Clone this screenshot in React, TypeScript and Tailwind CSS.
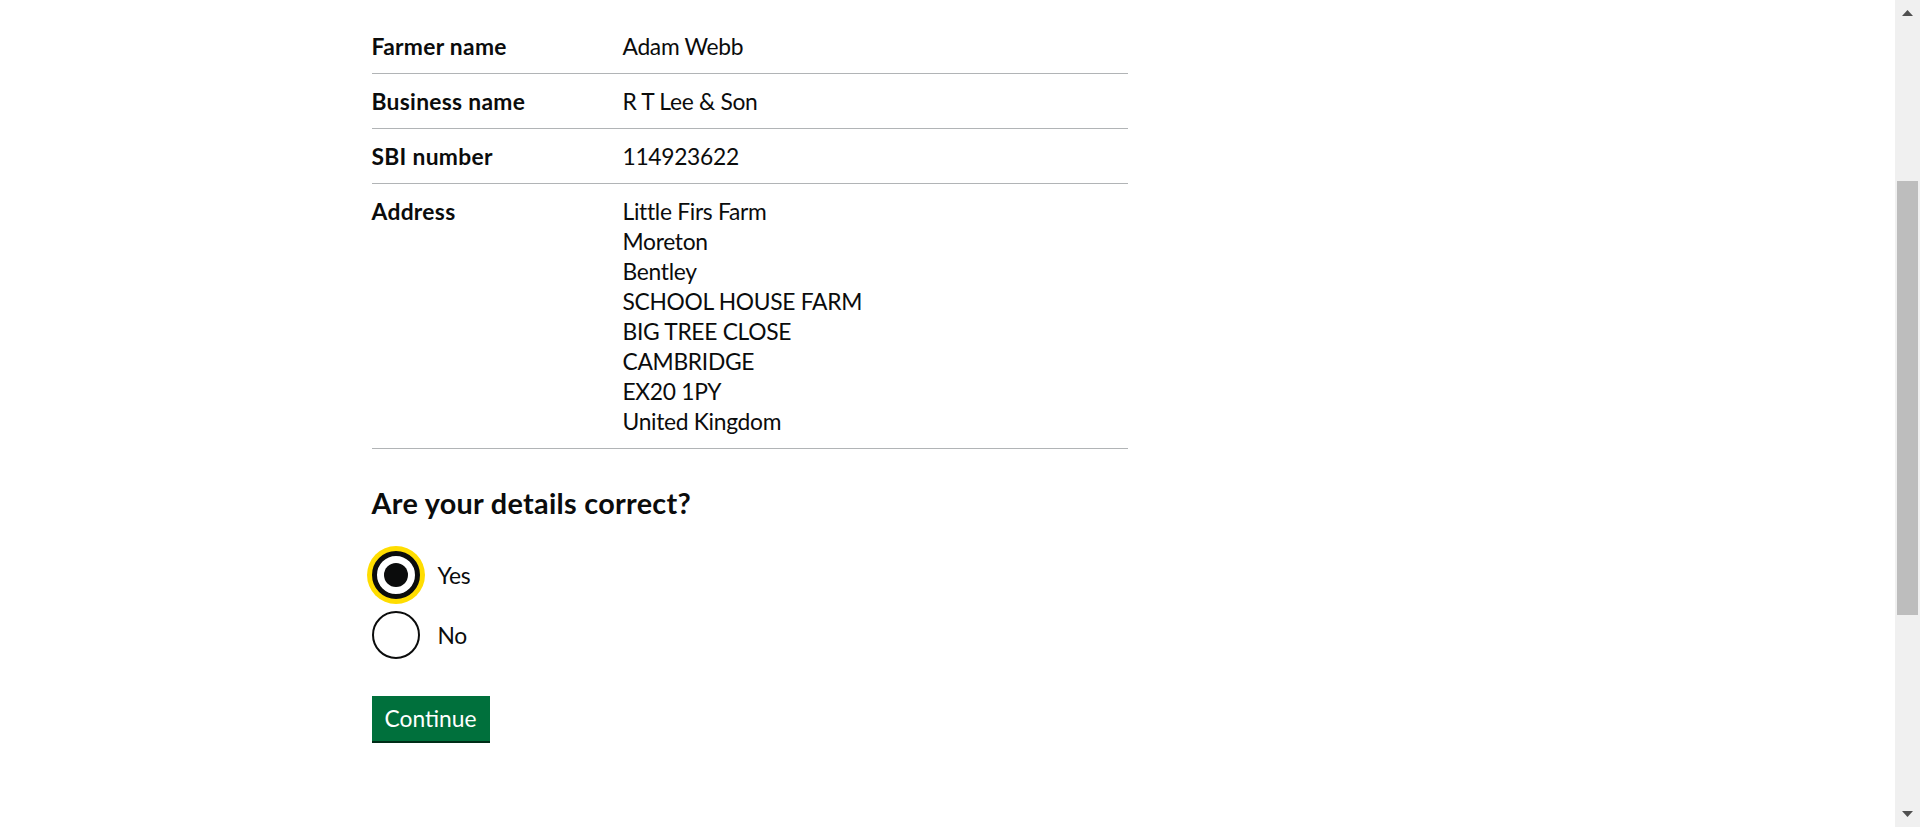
import React from "react";

const rows: { key: string; value: string[] }[] = [
  { key: "Farmer name", value: ["Adam Webb"] },
  { key: "Business name", value: ["R T Lee & Son"] },
  { key: "SBI number", value: ["114923622"] },
  {
    key: "Address",
    value: [
      "Little Firs Farm",
      "Moreton",
      "Bentley",
      "SCHOOL HOUSE FARM",
      "BIG TREE CLOSE",
      "CAMBRIDGE",
      "EX20 1PY",
      "United Kingdom",
    ],
  },
];

function Radio({ label, checked }: { label: string; checked?: boolean }) {
  return (
    <label className="flex h-[48px] items-center">
      <span
        className={
          checked
            ? "flex h-[48px] w-[48px] items-center justify-center rounded-full border-[5px] border-[#0b0c0c] bg-white ring-[5px] ring-[#ffdd00]"
            : "flex h-[48px] w-[48px] items-center justify-center rounded-full border-2 border-[#0b0c0c] bg-white"
        }
      >
        {checked && <span className="h-[24px] w-[24px] rounded-full bg-[#0b0c0c]" />}
      </span>
      <span className="pl-[18px] text-[22.8px] leading-[30px] tracking-[-0.3px]">{label}</span>
    </label>
  );
}

export default function App() {
  return (
    <div className="flex h-screen w-full overflow-hidden bg-white font-[family-name:Lato,sans-serif] text-[#0b0c0c]">
      <main className="min-w-0 flex-1">
        <div className="mx-auto w-[1152px] pt-[19px]">
          <div className="w-[756px]">
            <dl className="mb-[36px] text-[22.8px] leading-[30px]">
              {rows.map((r) => (
                <div
                  key={r.key}
                  className="grid grid-cols-[251px_1fr] border-b border-[#b1b4b6] py-[12px]"
                >
                  <dt className="pr-[24px] font-bold tracking-[0.3px]">{r.key}</dt>
                  <dd className="tracking-[-0.3px]">
                    {r.value.map((v) => (
                      <div key={v}>{v}</div>
                    ))}
                  </dd>
                </div>
              ))}
            </dl>

            <fieldset>
              <legend className="text-[28.8px] font-bold leading-[36px] tracking-[0.3px]">
                Are your details correct?
              </legend>
              <div className="mt-[30px] flex flex-col gap-[12px]">
                <Radio label="Yes" checked />
                <Radio label="No" />
              </div>
            </fieldset>

            <button className="mt-[37px] flex h-[45px] w-[118px] items-center justify-center bg-[#00703c] text-[22.8px] leading-none text-white shadow-[0_2px_0_#002d18]">
              Continue
            </button>
          </div>
        </div>
      </main>

      <aside className="flex h-full w-[25px] flex-col bg-[#f0f0f0]">
        <div className="flex h-[26px] items-center justify-center">
          <svg width="11" height="6" viewBox="0 0 11 6">
            <path d="M5.5 0 L11 6 L0 6 Z" fill="#505050" />
          </svg>
        </div>
        <div className="mx-[2px] mt-[155px] h-[434px] bg-[#bdbdbd]" />
        <div className="flex-1" />
        <div className="flex h-[26px] items-center justify-center">
          <svg width="11" height="6" viewBox="0 0 11 6">
            <path d="M0 0 L11 0 L5.5 6 Z" fill="#505050" />
          </svg>
        </div>
      </aside>
    </div>
  );
}
